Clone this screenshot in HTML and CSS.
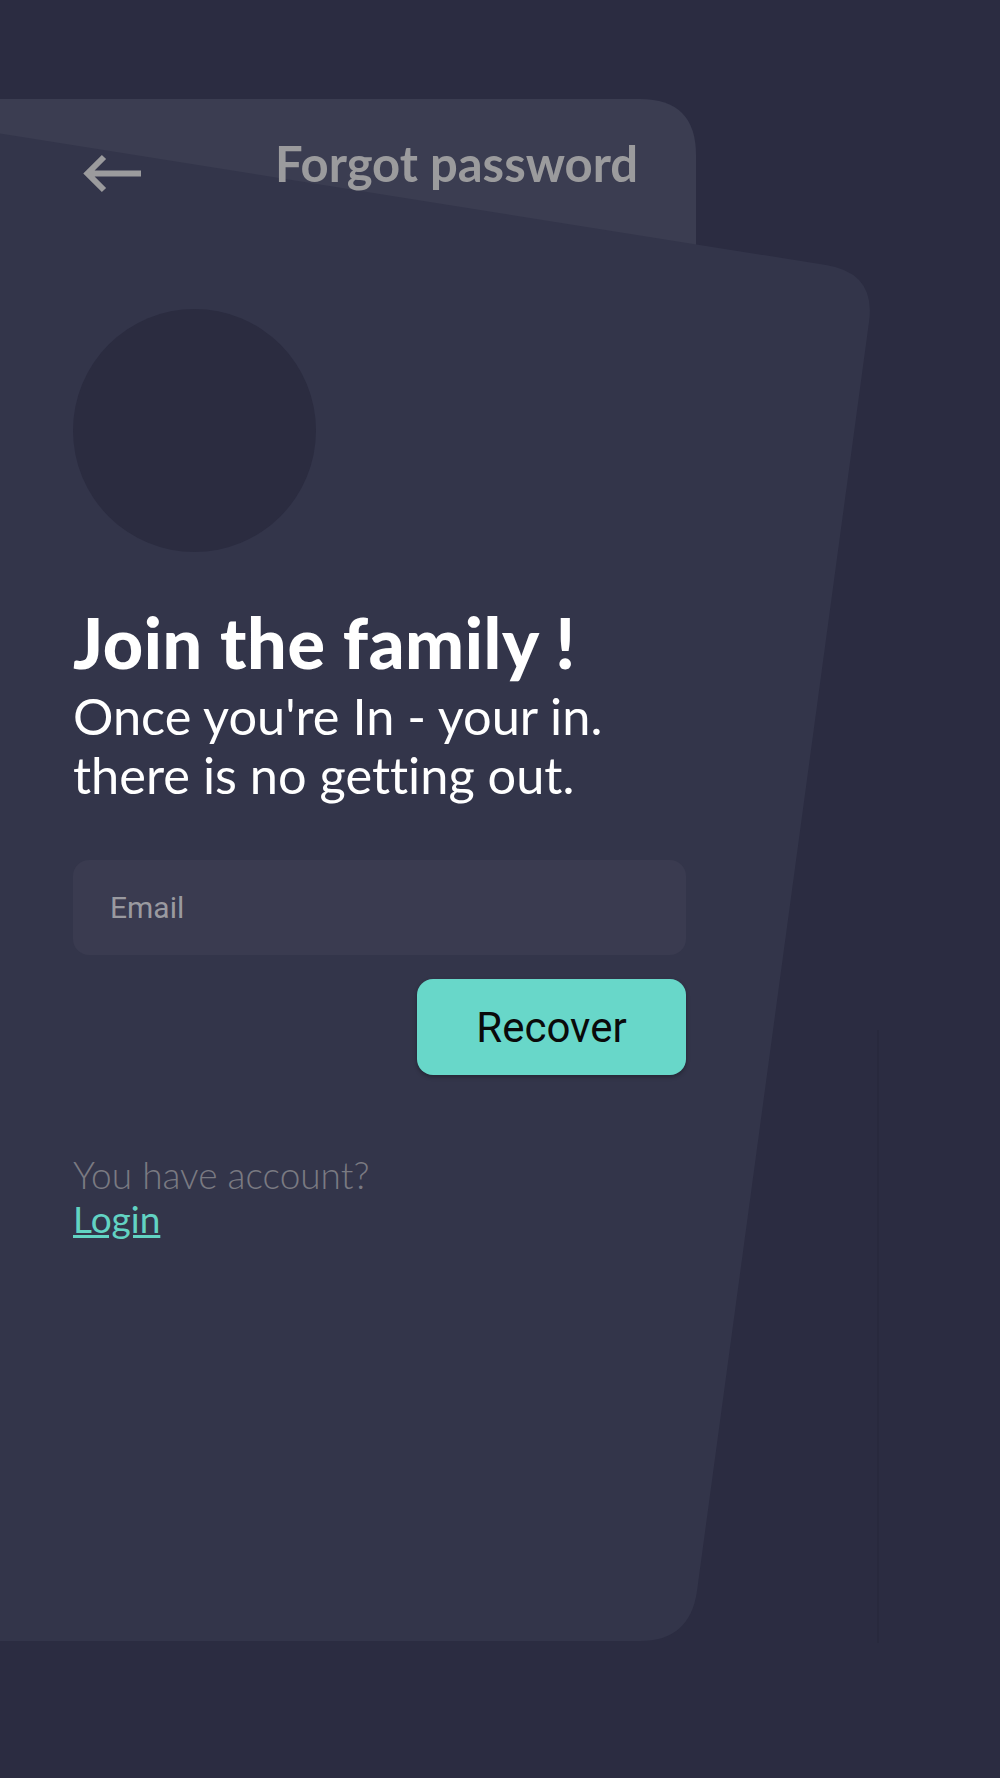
FILE: index.html
```html
<!DOCTYPE html>
<html lang="en">
<head>
    <meta charset="UTF-8">
    <meta name="viewport" content="width=device-width, initial-scale=1.0">
    <title>Forgot password</title>
    <link rel="stylesheet" href="styles.css">
</head>
<body>

    <div class="screen">
        <!-- stacked cards behind the form -->
        <svg class="cards" viewBox="0 0 1000 1778" width="1000" height="1778" aria-hidden="true">
            <path class="card-back" d="M-10,99 H640 Q696,99 696,155 V700 H-10 Z"/>
            <path class="card-front" d="M-10,132 L826,265 Q876,273 869,322 L697,1591 Q690,1641 640,1641 L-10,1641 Z"/>
            <rect class="card-edge" x="877" y="1030" width="2" height="613"/>
        </svg>

        <header class="topbar">
            <a href="#" class="back" aria-label="Back">
                <svg viewBox="0 0 60 40" width="60" height="40">
                    <path d="M59,19.5 H6 M22,3 L5.5,19.5 L22,36" />
                </svg>
            </a>
            <h2 class="title">Forgot password</h2>
        </header>

        <main class="content">
            <div class="avatar"></div>

            <h1>Join the family !</h1>
            <p class="lead">Once you're In - your in.<br>there is no getting out.</p>

            <form class="recover-form">
                <input type="email" id="email" name="email" placeholder="Email">
                <button type="submit">Recover</button>
            </form>

            <p class="account">
                You have account?<br>
                <a href="#">Login</a>
            </p>
        </main>
    </div>

</body>
</html>
```

FILE: styles.css
```css
body {
    margin: 0;
    padding: 0;
    background-color: #2b2c41;
    font-family: 'Lato', 'Noto Sans', sans-serif;
    font-variant-ligatures: none;
    color: #fff;
}

.screen {
    position: relative;
    width: 1000px;
    height: 1778px;
    overflow: hidden;
}

.cards {
    position: absolute;
    top: 0;
    left: 0;
}

.card-back {
    fill: #3b3d51;
}

.card-front {
    fill: #33354a;
}

.card-edge {
    fill: rgba(0, 0, 0, 0.06);
}

.topbar {
    position: relative;
    display: flex;
    align-items: flex-start;
    gap: 133px;
    padding: 135px 0 0 82px;
}

.back {
    display: block;
    margin-top: 19px;
    width: 60px;
    height: 40px;
}

.back path {
    fill: none;
    stroke: #9b9b9d;
    stroke-width: 6;
}

.title {
    margin: 0;
    font-size: 49px;
    line-height: 56px;
    font-weight: 700;
    color: #9b9b9d;
}

.content {
    position: relative;
    padding-left: 73px;
    width: 613px;
}

.avatar {
    width: 243px;
    height: 243px;
    margin-top: 115px;
    border-radius: 50%;
    background-color: #2b2c40;
}

h1 {
    margin: 50px 0 0;
    font-size: 70px;
    line-height: 80px;
    font-weight: 900;
    letter-spacing: 0.6px;
}

.lead {
    margin: 4px 0 0;
    font-size: 50.5px;
    line-height: 59px;
    font-weight: 400;
}

.recover-form {
    display: flex;
    flex-direction: column;
    align-items: flex-end;
    gap: 24px;
    margin-top: 56px;
}

.recover-form input {
    width: 100%;
    height: 95px;
    padding: 0 37px;
    box-sizing: border-box;
    border: none;
    border-radius: 16px;
    background-color: #3a3b50;
    font-family: 'Roboto', sans-serif;
    font-size: 30px;
    color: #ddd;
    outline: none;
}

.recover-form input::placeholder {
    color: #9a9aa0;
}

.recover-form button {
    width: 269px;
    height: 96px;
    border: none;
    border-radius: 16px;
    background-color: #68d7c9;
    box-shadow: 0 2px 4px rgba(0, 0, 0, 0.3);
    font-family: 'Roboto', sans-serif;
    font-size: 42px;
    color: #0a0a0a;
    cursor: pointer;
}

.account {
    margin: 78px 0 0;
    font-size: 37px;
    line-height: 44px;
    font-weight: 300;
    color: #7a7a82;
}

.account a {
    color: #62d3c3;
    font-weight: 400;
}
```
